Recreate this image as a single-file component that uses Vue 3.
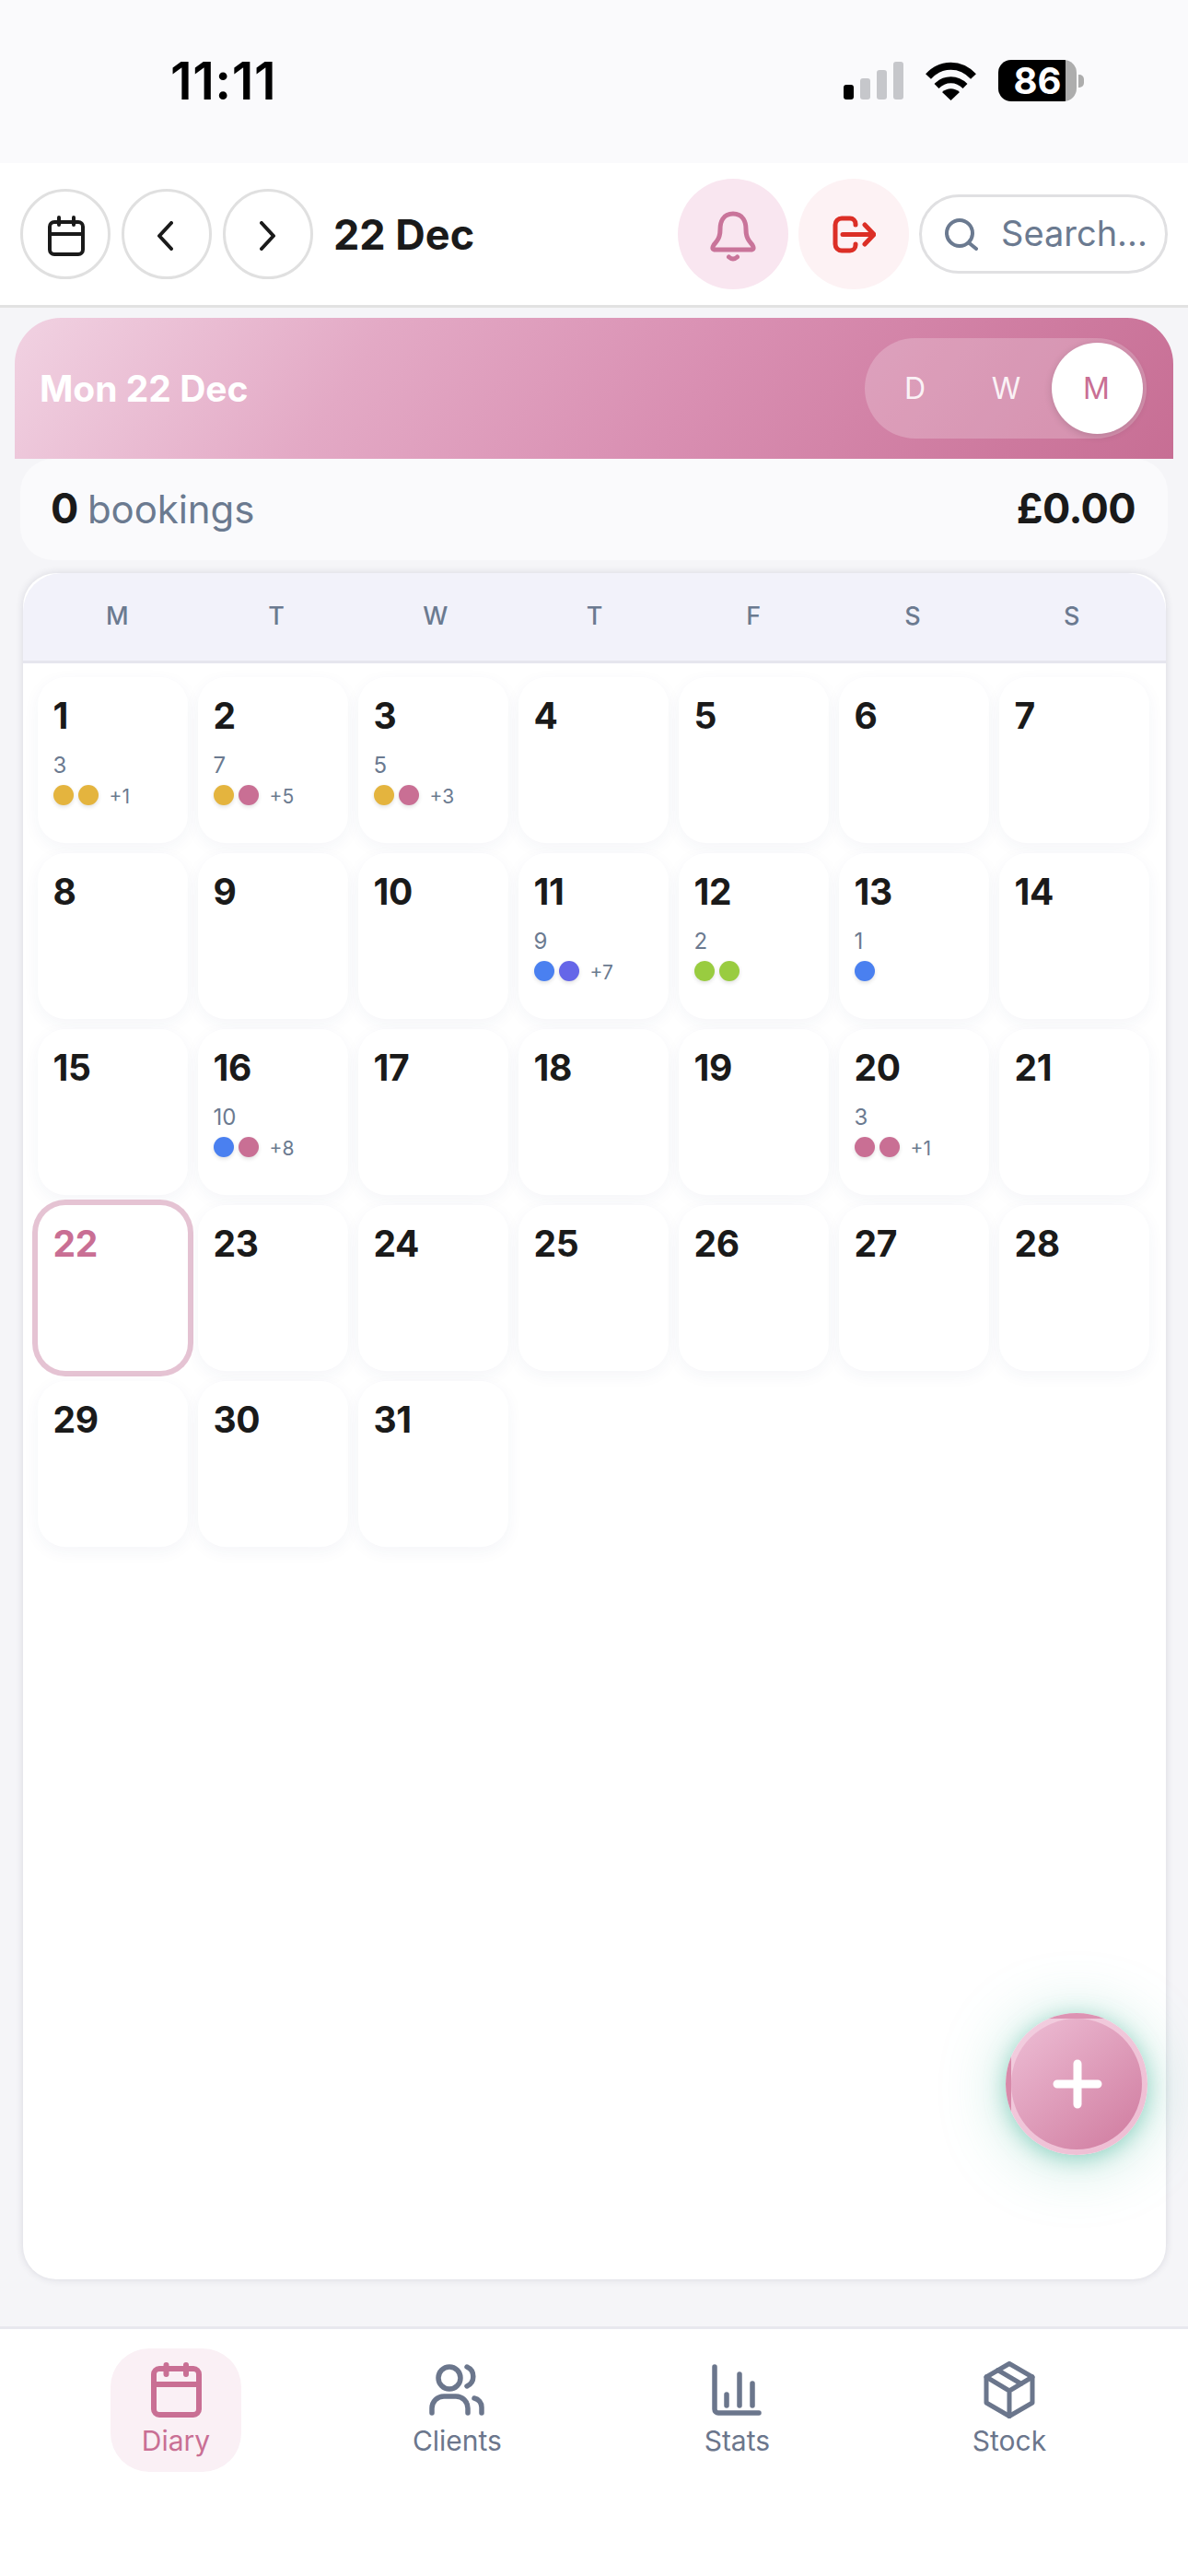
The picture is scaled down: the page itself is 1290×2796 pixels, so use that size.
<script setup>
const Y = '#e4b43e', P = '#c96f94', B = '#4a80f0', V = '#6566e8', G = '#99cc40'
const info = {
  1: { n: 3, dots: [Y, Y], more: 1 },
  2: { n: 7, dots: [Y, P], more: 5 },
  3: { n: 5, dots: [Y, P], more: 3 },
  11: { n: 9, dots: [B, V], more: 7 },
  12: { n: 2, dots: [G, G] },
  13: { n: 1, dots: [B] },
  16: { n: 10, dots: [B, P], more: 8 },
  20: { n: 3, dots: [P, P], more: 1 }
}
const days = Array.from({ length: 31 }, (_, i) => ({ d: i + 1, info: info[i + 1] }))
const weekdays = ['M', 'T', 'W', 'T', 'F', 'S', 'S']
</script>

<template>
  <div class="app">
    <div class="status">
      <span class="time">11:11</span>
      <div class="status-right">
        <div class="signal">
          <i class="on h16"></i><i class="h23"></i><i class="h32"></i><i class="h41"></i>
        </div>
        <svg class="wifi" width="57" height="42" viewBox="0 0 57 42">
          <path d="M4 16C18 1 39 1 53 16" fill="none" stroke="#000" stroke-width="8" />
          <path d="M13 26.500C22 17.500 35 17.500 44 26.500" fill="none" stroke="#000" stroke-width="7" />
          <path d="M28.500 42L19 33C25 28 32 28 38 33Z" fill="#000" />
        </svg>
        <div class="battery"><span>86</span></div>
        <div class="nub"></div>
      </div>
    </div>

    <header class="top">
      <button class="circle">
        <svg class="cal" width="40" height="44" viewBox="0 0 40 44" fill="none" stroke="#1a1a1a" stroke-width="4" stroke-linecap="round">
          <rect x="2" y="7" width="36" height="35" rx="5" />
          <path d="M2 20H38M12 2V10M28 2V10" />
        </svg>
      </button>
      <button class="circle">
        <svg class="chev-l" width="18" height="32" viewBox="0 0 18 32" fill="none" stroke="#1a1a1a" stroke-width="4" stroke-linecap="round" stroke-linejoin="round">
          <path d="M16 2L3 16L16 30" />
        </svg>
      </button>
      <button class="circle">
        <svg class="chev-r" width="18" height="32" viewBox="0 0 18 32" fill="none" stroke="#1a1a1a" stroke-width="4" stroke-linecap="round" stroke-linejoin="round">
          <path d="M2 2L15 16L2 30" />
        </svg>
      </button>
      <h1 class="title">22 Dec</h1>
      <div class="top-right">
        <button class="round bell">
          <svg class="bell-icon" width="50" height="55" viewBox="0 0 50 55" fill="none" stroke="#c9749a" stroke-width="5" stroke-linecap="round" stroke-linejoin="round">
            <path d="M25 3C14 3 11 12 11 20C11 30 7 33 4 37Q1 42 6 42H44Q49 42 46 37C43 33 39 30 39 20C39 12 36 3 25 3Z" />
            <path d="M20.500 50Q25 54 29.500 50" />
          </svg>
        </button>
        <button class="round logout">
          <svg width="47" height="41" viewBox="0 0 47 41" fill="none" stroke="#dc2f26" stroke-width="5" stroke-linecap="round" stroke-linejoin="round">
            <path d="M25 10V9A6 6 0 0 0 19 3H10A7 7 0 0 0 3 10V31A7 7 0 0 0 10 38H19A6 6 0 0 0 25 32V31" />
            <path d="M11 20.500H44M35 10L45 20.500L35 31" />
          </svg>
        </button>
        <div class="search">
          <svg class="search-icon" width="37" height="35" viewBox="0 0 37 35" fill="none" stroke="#6b7a90" stroke-width="4" stroke-linecap="round">
            <circle cx="17" cy="16" r="14" />
            <path d="M27 26.500L35 33" />
          </svg>
          <span class="search-text">Search...</span>
        </div>
      </div>
    </header>

    <main class="main">
      <section class="banner">
        <span class="banner-title">Mon 22 Dec</span>
        <div class="toggle">
          <span class="opt">D</span>
          <span class="opt">W</span>
          <span class="opt active">M</span>
        </div>
      </section>

      <section class="summary">
        <span class="count"><b>0</b> bookings</span>
        <b class="money">£0.00</b>
      </section>

      <section class="card">
        <div class="week">
          <span v-for="(w, i) in weekdays" :key="i">{{ w }}</span>
        </div>
        <div class="grid">
          <div v-for="c in days" :key="c.d" class="cell" :class="{ today: c.d === 22 }">
            <div class="num">{{ c.d }}</div>
            <template v-if="c.info">
              <div class="n">{{ c.info.n }}</div>
              <div class="dots">
                <i v-for="(col, k) in c.info.dots" :key="k" class="dot" :style="{ background: col }"></i>
                <span v-if="c.info.more" class="more">+{{ c.info.more }}</span>
              </div>
            </template>
          </div>
        </div>
      </section>

      <button class="fab">
        <svg class="plus" width="54" height="54" viewBox="0 0 54 54" stroke="#fff" stroke-width="9" stroke-linecap="round">
          <path d="M27 5V49M5 27H49" />
        </svg>
      </button>
    </main>

    <nav class="nav">
      <div class="tab active">
        <svg width="55" height="60" viewBox="0 0 55 60" fill="none" stroke="#c96f94" stroke-width="6" stroke-linecap="round">
          <rect x="3" y="7" width="49" height="50" rx="6" />
          <path d="M3 24H52M16.500 3V13M38 3V13" />
        </svg>
        <span>Diary</span>
      </div>
      <div class="tab">
        <svg width="60" height="60" viewBox="0 0 60 60" fill="none" stroke="#6b768c" stroke-width="5.500" stroke-linecap="round">
          <circle cx="22" cy="17" r="12" />
          <path d="M41 5A11.500 11.500 0 0 1 41 26" />
          <path d="M3 55V50A13 13 0 0 1 16 37H29A13 13 0 0 1 42 50V55" />
          <path d="M49 39A10 10 0 0 1 57 49V55" />
        </svg>
        <span>Clients</span>
      </div>
      <div class="tab">
        <svg width="54" height="60" viewBox="0 0 54 60" fill="none" stroke="#6b768c" stroke-width="5.500" stroke-linecap="round">
          <path d="M3 5V51A4 4 0 0 0 7 55H51" />
          <path d="M16 35V47M30 13V47M44 23V47" />
        </svg>
        <span>Stats</span>
      </div>
      <div class="tab">
        <svg class="stock" width="56" height="62" viewBox="0 0 56 62" fill="none" stroke="#6b768c" stroke-width="5" stroke-linecap="round" stroke-linejoin="round">
          <path d="M28 2.500L53 17V45L28 59.500L3 45V17Z" />
          <path d="M3 17L28 32L53 17M28 32V59.500M15.500 9.500L41 24.500" />
        </svg>
        <span>Stock</span>
      </div>
    </nav>
  </div>
</template>

<style>
html, body { margin: 0; background: #f5f5f8; }
</style>

<style scoped>
.app {
  width: 1290px;
  height: 2796px;
  display: flex;
  flex-direction: column;
  font-family: Inter, "Noto Sans", sans-serif;
  background: #f5f5f8;
  color: #1a1a1a;
  overflow: hidden;
}
button { font: inherit; padding: 0; }

.status {
  height: 175px;
  padding: 0 113px 2px 185px;
  display: flex;
  align-items: center;
  justify-content: space-between;
  background: #fafafc;
  flex: none;
}
.time { font-size: 56px; letter-spacing: 0.5px; font-weight: 600; color: #000; line-height: 1; }
.status-right { display: flex; align-items: center; position: relative; }
.signal { display: flex; align-items: flex-end; gap: 7px; height: 41px; margin-right: 23px; }
.signal i { width: 11px; border-radius: 3px; background: #c6c7cb; }
.signal i.on { background: #000; }
.h16 { height: 16px; }
.h23 { height: 23px; }
.h32 { height: 32px; }
.h41 { height: 41px; }
.wifi { margin-right: 23px; }
.battery {
  width: 85px;
  height: 45px;
  border-radius: 14px;
  background: linear-gradient(90deg, #000 86%, #adadad 86%);
  color: #fff;
  font-size: 40px;
  font-weight: 700;
  line-height: 45px;
  text-align: center;
}
.nub { width: 6px; height: 14px; margin-left: 2px; border-radius: 0 5px 5px 0; background: #adadad; }

.top {
  flex: none;
  height: 154px;
  box-sizing: content-box;
  border-bottom: 3px solid #e2e2e2;
  background: #fff;
  display: flex;
  align-items: center;
  padding: 0 22px;
  gap: 12px;
}
.circle {
  width: 98px;
  height: 98px;
  border-radius: 50%;
  border: 3px solid #e0e0e0;
  background: #fff;
  display: flex;
  align-items: center;
  justify-content: center;
  box-sizing: border-box;
}
.cal { margin: 4px 0 0 2px; }
.chev-l { margin: 4px 4px 0 0; }
.chev-r { margin-top: 4px; }
.bell-icon { margin-top: 4px; }
.title { margin: 0 0 0 10px; font-size: 45px; font-weight: 700; line-height: 1; color: #1a1a1a; }
.top-right { margin-left: auto; display: flex; align-items: center; gap: 11px; }
.round {
  width: 120px;
  height: 120px;
  border: 0;
  border-radius: 50%;
  display: flex;
  align-items: center;
  justify-content: center;
}
.bell { background: #f9e6f0; }
.logout { background: #fdf2f4; }
.search {
  width: 270px;
  height: 86px;
  box-sizing: border-box;
  border: 3px solid #e0e0e2;
  border-radius: 43px;
  display: flex;
  align-items: center;
  padding-left: 24px;
  gap: 25px;
  background: #fff;
}
.search-icon { flex: none; }
.search-text {
  white-space: nowrap;
  font-size: 38px;
  color: #6b7a90;
  line-height: 1.2;
}

.main {
  flex: 1;
  min-height: 0;
  position: relative;
  display: flex;
  flex-direction: column;
  padding: 11px 0 51px;
}
.banner {
  flex: none;
  height: 153px;
  margin: 0 16px;
  box-sizing: border-box;
  border-radius: 50px 50px 0 0;
  background: linear-gradient(125deg, #f1d2e2 0%, #e3a9c5 30%, #d98fb2 58%, #c76e94 100%);
  display: flex;
  align-items: center;
  justify-content: space-between;
  padding: 0 29px 0 27px;
}
.banner-title { font-size: 39px; font-weight: 700; color: #fff; line-height: 1; }
.toggle {
  display: flex;
  padding: 5px 4px 5px 5px;
  border-radius: 55px;
  background: rgba(255, 255, 255, 0.22);
}
.opt {
  width: 99px;
  height: 99px;
  box-sizing: border-box;
  border-radius: 50%;
  display: flex;
  align-items: center;
  justify-content: center;
  font-size: 32px;
  color: rgba(255, 255, 255, 0.9);
}
.opt.active {
  background: #fff;
  color: #c96f94;
  padding-right: 2px;
  box-shadow: 0 2px 8px rgba(0, 0, 0, 0.15);
}
.summary {
  flex: none;
  height: 110px;
  box-sizing: border-box;
  margin: 0 22px 14px;
  padding: 0 35px 3px 33px;
  border-radius: 36px;
  background: #fafafc;
  display: flex;
  align-items: center;
  justify-content: space-between;
}
.count { font-size: 42px; color: #6b7a90; letter-spacing: -0.1px; }
.count b { font-size: 45px; font-weight: 700; color: #1a1a1a; margin-right: -2px; }
.money { font-size: 45px; font-weight: 700; color: #1a1a1a; letter-spacing: -0.6px; }

.card {
  flex: 1;
  min-height: 0;
  margin: 0 24px 0 25px;
  border-radius: 36px;
  background: #fff;
  overflow: hidden;
  box-shadow: 0 0 8px rgba(40, 40, 70, 0.14);
}
.week {
  height: 95px;
  box-sizing: content-box;
  padding: 0 16px;
  display: grid;
  grid-template-columns: repeat(7, 1fr);
  align-items: center;
  justify-items: center;
  background: #f2f2fa;
  border-bottom: 3px solid #e6e6ee;
  border-radius: 42px 42px 0 0;
  font-size: 27px;
  line-height: 27px;
  font-weight: 500;
  color: #6b7a90;
}
.week span { margin-bottom: 3px; }
.grid {
  display: grid;
  grid-template-columns: repeat(7, 163px);
  grid-auto-rows: 180px;
  gap: 11px;
  padding: 15px 16px;
}
.cell {
  border-radius: 30px;
  background: #fff;
  box-shadow: 0 5px 18px rgba(40, 50, 110, 0.05);
  padding: 23px 0 0 16.5px;
  box-sizing: border-box;
}
.cell.today { box-shadow: 0 0 0 6px #e5c3d3; }
.num { font-size: 39px; letter-spacing: -0.4px; font-weight: 700; line-height: 38px; color: #1a1a1a; }
.today .num { color: #c96f94; }
.n { margin-top: 23px; font-size: 24px; line-height: 24px; color: #6b7a90; }
.dots { margin-top: 9px; display: flex; align-items: center; gap: 5px; height: 22px; }
.dot { width: 22px; height: 22px; border-radius: 50%; box-shadow: 0 2px 4px rgba(0, 0, 0, 0.12); }
.more { margin-left: 7px; font-size: 21px; line-height: 22px; padding-top: 3px; color: #6b7a90; }

.fab {
  position: absolute;
  top: 1851px;
  left: 1092px;
  width: 154px;
  height: 154px;
  box-sizing: border-box;
  border-radius: 50%;
  border: 6px solid transparent;
  background:
    linear-gradient(140deg, #eebfd6 0%, #cf7a9e 100%) padding-box,
    linear-gradient(#dd93b3 6px, transparent 6px) border-box,
    linear-gradient(90deg, #d88aaa 6px, transparent 6px) border-box,
    linear-gradient(140deg, #f2cfe0 0%, #eebcd2 100%) border-box;
  box-shadow: 0 4px 22px rgba(90, 190, 165, 0.55), 0 6px 70px rgba(90, 190, 165, 0.4);
  display: flex;
  align-items: center;
  justify-content: center;
}
.plus { margin-left: 2px; }

.nav {
  flex: none;
  height: 271px;
  box-sizing: border-box;
  border-top: 3px solid #e8e8ee;
  background: #fff;
  display: flex;
  justify-content: space-around;
  align-items: flex-start;
  padding: 21px 44px 0;
}
.tab {
  height: 134px;
  box-sizing: border-box;
  padding: 15px 34px 0;
  border-radius: 42px;
  display: flex;
  flex-direction: column;
  align-items: center;
  color: #6b768c;
}
.tab svg { flex: none; }
.tab svg.stock { margin: -1px 0; }
.tab span { margin-top: 7px; font-size: 30px; line-height: 36px; }
.tab.active { background: #faf0f5; color: #c96f94; }
</style>
